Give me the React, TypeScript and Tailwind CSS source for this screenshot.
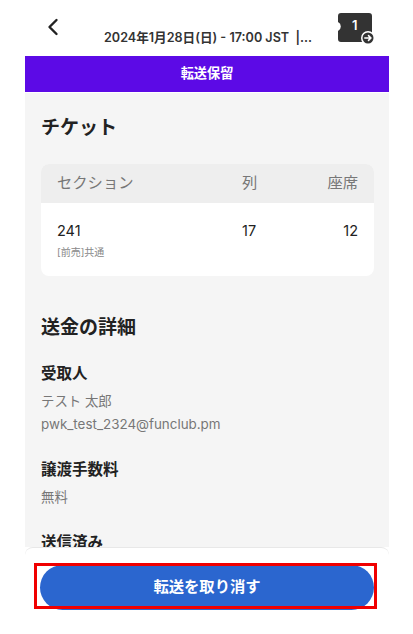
const font = { fontFamily: '"Inter", "Noto Sans CJK JP", sans-serif' };

function TicketIcon() {
  return (
    <div className="relative w-[36px] h-[32px] mt-[13px]">
      <svg width="36" height="32" viewBox="0 0 36 32" className="absolute left-0 top-0">
        <path d="M3 0H31a3 3 0 0 1 3 3V26a3 3 0 0 1-3 3H3a3 3 0 0 1-3-3V18a5 5 0 0 0 0-9V3A3 3 0 0 1 3 0Z" fill="#333333" />
        <circle cx="30" cy="25" r="7" fill="#ffffff" />
        <circle cx="30" cy="25" r="5.5" fill="#333333" />
        <path d="M26.8 25H33M30.5 22.6L33 25L30.5 27.4" fill="none" stroke="#ffffff" strokeWidth="1.5" strokeLinecap="round" strokeLinejoin="round" />
      </svg>
      <span className="absolute left-[14px] top-[2px] text-white text-[13px] font-semibold leading-[20px]">1</span>
    </div>
  );
}

function Field({ label, lines }: { label: string; lines: string[] }) {
  return (
    <div className="mb-[23px]">
      <div className="text-[15.5px] font-semibold leading-[22px] text-[#222222]">{label}</div>
      <div className="mt-[5px] text-[13.4px] leading-[23px] text-[#777777]">
        {lines.map((l) => (
          <div key={l}>{l}</div>
        ))}
      </div>
    </div>
  );
}

export default function App() {
  return (
    <div className="w-[413px] h-[634px] bg-white overflow-hidden flex flex-col pl-[25px] pr-[24px]" style={font}>
      <header className="h-[56px] flex-none flex relative">
        <svg width="14" height="20" viewBox="0 0 14 20" className="ml-[21px] mt-[17px] flex-none">
          <path d="M10.5 3L3.5 10L10.5 17" fill="none" stroke="#222222" strokeWidth="2.4" strokeLinecap="round" strokeLinejoin="round" />
        </svg>
        <div className="ml-[44px] mt-[28px] w-[234px] flex-none text-[12.6px] font-semibold leading-[20px] text-[#333333] whitespace-nowrap">
          2024年1月28日(日) - 17:00 JST&nbsp;&nbsp;|...
        </div>
        <TicketIcon />
      </header>
      <div className="h-[36px] flex-none bg-[#5c0ae6] text-white text-[13.2px] font-semibold flex items-center justify-center">
        転送保留
      </div>
      <main className="flex-1 min-h-0 overflow-hidden bg-[#f5f5f5] mt-[1px] px-[16px]">
        <h2 className="mt-[20px] text-[19px] font-semibold leading-[30px] text-[#222222]">チケット</h2>
        <div className="mt-[21px] rounded-[8px] overflow-hidden bg-white w-[333px]">
          <div className="h-[39px] bg-[#eeeeee] flex items-center px-[16px] text-[15.3px] text-[#777777]">
            <span className="w-[185px]">セクション</span>
            <span className="w-[40px]">列</span>
            <span className="flex-1 text-right">座席</span>
          </div>
          <div className="h-[73px] px-[16px] pt-[17px]">
            <div className="flex text-[14.5px] leading-[22px] text-[#222222]">
              <span className="w-[185px]">241</span>
              <span className="w-[40px]">17</span>
              <span className="flex-1 text-right">12</span>
            </div>
            <div className="mt-[2px] text-[10px] leading-[16px] text-[#888888]">[前売]共通</div>
          </div>
        </div>
        <h2 className="mt-[38px] text-[19px] font-semibold leading-[28px] text-[#222222]">送金の詳細</h2>
        <div className="mt-[21px]">
          <Field label="受取人" lines={["テスト 太郎", "pwk_test_2324@funclub.pm"]} />
          <Field label="譲渡手数料" lines={["無料"]} />
          <Field label="送信済み" lines={[]} />
        </div>
      </main>
      <footer className="h-[87px] flex-none bg-white rounded-t-[8px] border-t border-[#e8e8e8] relative pt-[17px] pl-[15px] pr-[15px]">
        <button className="w-full h-[45px] rounded-full bg-[#2b66cf] text-white text-[15.3px] font-semibold">
          転送を取り消す
        </button>
        <div className="absolute left-[9px] top-[15px] w-[343px] h-[46px] border-[3px] border-[#f00000] pointer-events-none" />
      </footer>
    </div>
  );
}
